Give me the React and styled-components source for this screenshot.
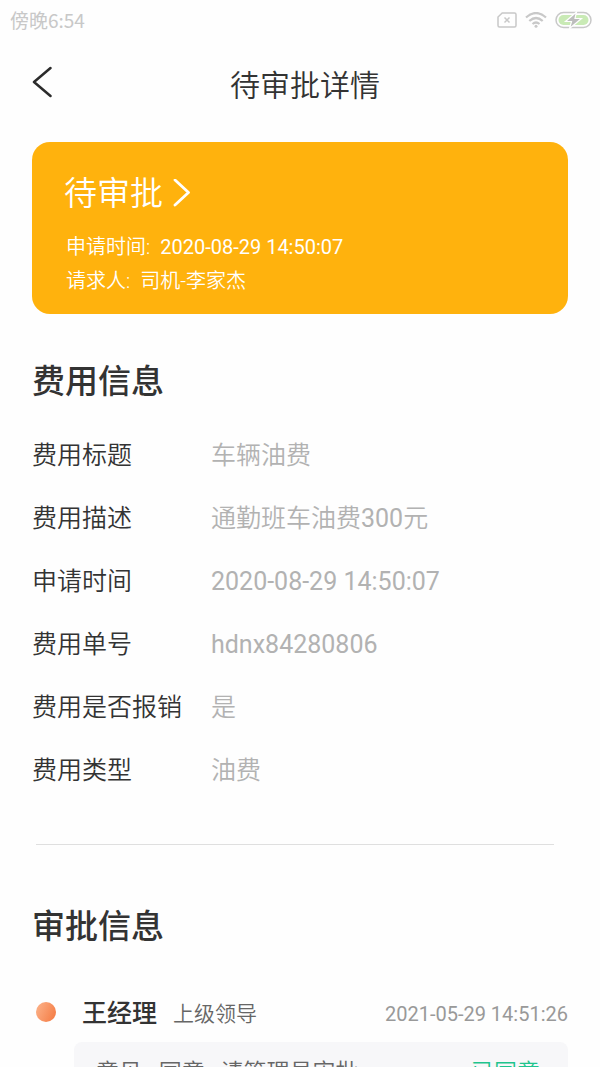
import React from "react";
import styled, { createGlobalStyle } from "styled-components";

const GlobalStyle = createGlobalStyle`
  * {
    box-sizing: border-box;
  }

  body {
    margin: 0;
    background: #fefefe;
    color: #333333;
    font-family: Roboto, "Noto Sans CJK SC", sans-serif;
    font-weight: 350;
  }
`;

const Page = styled.div`
  height: 100vh;
  overflow: hidden;
`;

const StatusBar = styled.div`
  display: flex;
  align-items: center;
  justify-content: space-between;
  height: 40px;
  padding: 0 8px 0 10px;
  color: #c8c8c8;
  font-family: "Noto Sans CJK SC", sans-serif;
  font-size: 19px;
  font-weight: 400;
  line-height: 40px;
`;

const StatusIcons = styled.div`
  display: flex;
  align-items: center;
  gap: 8px;
`;

const NavBar = styled.header`
  display: grid;
  grid-template-columns: 56px 1fr 56px;
  align-items: start;
  height: 88px;
  padding: 18px 10px 0 20px;
`;

const BackButton = styled.button`
  display: flex;
  align-items: center;
  justify-content: flex-start;
  height: 48px;
  padding: 0 12px;
  border: none;
  background: none;
  color: #2b2b2b;
  cursor: pointer;
`;

const Title = styled.h1`
  margin: 0;
  padding-top: 4px;
  font-size: 30px;
  font-weight: 350;
  line-height: 48px;
  text-align: center;
`;

const Content = styled.main`
  padding: 14px 32px 0;
`;

const StatusCard = styled.section`
  padding: 26px 32px 16px;
  border-radius: 18px;
  background: #ffb20d;
  color: #ffffff;
`;

const StatusLink = styled.a`
  display: inline-flex;
  align-items: center;
  gap: 10px;
  margin-bottom: 10px;
  color: inherit;
  font-size: 33px;
  line-height: 52px;
  text-decoration: none;
`;

const CardLine = styled.p`
  display: flex;
  gap: 10px;
  margin: 0;
  padding-left: 2px;
  font-size: 20px;
  line-height: 34px;
`;

const Latin = styled.span`
  font-weight: 400;
`;

const SectionTitle = styled.h2`
  margin: 0;
  font-size: 33px;
  font-weight: 500;
  line-height: 48px;
`;

const Section = styled.section`
  padding-top: 44px;
`;

const FieldList = styled.dl`
  margin: 18px 0 0;
`;

const Field = styled.div`
  display: flex;
  font-size: 25px;
  line-height: 63px;
`;

const FieldName = styled.dt`
  width: 179px;
`;

const FieldValue = styled.dd`
  margin: 0;
  color: #b2b2b2;
`;

const Divider = styled.hr`
  height: 1px;
  margin: 42px 14px 14px 4px;
  border: none;
  background: #dfdfdf;
`;

const Step = styled.article`
  display: grid;
  grid-template-columns: 42px 1fr;
  margin-top: 43px;
`;

const Dot = styled.span`
  width: 20px;
  height: 20px;
  margin: 8px 4px;
  border-radius: 50%;
  background: linear-gradient(115deg, #fcb48c, #f4783f);
`;

const StepHead = styled.div`
  display: flex;
  align-items: center;
  padding-left: 8px;
  line-height: 40px;
`;

const StepName = styled.strong`
  font-size: 25px;
  font-weight: 500;
`;

const StepRole = styled.span`
  margin-left: 16px;
  color: #666666;
  font-size: 21px;
`;

const StepTime = styled.time`
  margin-left: auto;
  color: #999999;
  font-size: 20px;
  font-weight: 400;
`;

const Comment = styled.div`
  display: flex;
  grid-column: 2;
  gap: 12px;
  margin-top: 8px;
  padding: 11px 28px 8px 22px;
  border-radius: 8px;
  background: #f7f7f9;
  color: #666666;
  font-size: 23px;
  line-height: 40px;
`;

const Agreed = styled.span`
  margin-left: auto;
  color: #1fc48d;
`;

const fields = [
  { name: "费用标题", value: "车辆油费" },
  { name: "费用描述", value: <>通勤班车油费<Latin>300</Latin>元</> },
  { name: "申请时间", value: <Latin>2020-08-29 14:50:07</Latin> },
  { name: "费用单号", value: <Latin>hdnx84280806</Latin> },
  { name: "费用是否报销", value: "是" },
  { name: "费用类型", value: "油费" },
];

const NoSimIcon = () => (
  <svg width="20" height="16" viewBox="0 0 20 16" fill="none" stroke="#c8c8c8" strokeWidth="1.5">
    <path d="M5.2 1H17.5A1.5 1.5 0 0 1 19 2.5V13.5A1.5 1.5 0 0 1 17.5 15H2.5A1.5 1.5 0 0 1 1 13.5V5Z" />
    <path d="M7.5 5.5l5 5M12.5 5.5l-5 5" />
  </svg>
);

const WifiIcon = () => (
  <svg width="22" height="16" viewBox="0 0 22 16" fill="none" stroke="#c8c8c8" strokeWidth="2.2">
    <path d="M1 5.5Q11 -3.5 21 5.5" />
    <path d="M4.3 9Q11 3 17.7 9" />
    <path d="M7.5 12Q11 9 14.5 12" />
    <circle cx="11" cy="14.3" r="1.5" fill="#c8c8c8" stroke="none" />
  </svg>
);

const BatteryIcon = () => (
  <svg width="37" height="18" viewBox="0 0 37 18">
    <rect x="1" y="1.5" width="35" height="15" rx="7.5" fill="#fefefe" stroke="#c8c8c8" strokeWidth="1.5" />
    <rect x="3.5" y="4" width="30" height="10" rx="5" fill="#c9eab5" />
    <path d="M21.5 1L10.500 10.5H16.5L14.5 17.5L26.5 7.5H20Z" fill="#bdbdbd" stroke="#fefefe" strokeWidth="1.2" />
  </svg>
);

const App = () => {
  return (
    <Page>
      <GlobalStyle />
      <StatusBar>
        <span>傍晚6:54</span>
        <StatusIcons>
          <NoSimIcon />
          <WifiIcon />
          <BatteryIcon />
        </StatusIcons>
      </StatusBar>
      <NavBar>
        <BackButton type="button" aria-label="返回">
          <svg width="20" height="32" viewBox="0 0 20 32" fill="none" stroke="currentColor" strokeWidth="2.5" strokeLinecap="round" strokeLinejoin="round">
            <path d="M18.5 2L2 16L18.5 30" />
          </svg>
        </BackButton>
        <Title>待审批详情</Title>
      </NavBar>
      <Content>
        <StatusCard>
          <StatusLink href="#approval">
            待审批
            <svg width="18" height="30" viewBox="0 0 18 30" fill="none" stroke="currentColor" strokeWidth="2.8" strokeLinecap="round" strokeLinejoin="round">
              <path d="M2 1L15.5 13.5L2 26" />
            </svg>
          </StatusLink>
          <CardLine>
            <span>申请时间:</span>
            <Latin>2020-08-29 14:50:07</Latin>
          </CardLine>
          <CardLine>
            <span>请求人:</span>
            <span>司机-李家杰</span>
          </CardLine>
        </StatusCard>
        <Section>
          <SectionTitle>费用信息</SectionTitle>
          <FieldList>
            {fields.map((field) => (
              <Field key={field.name}>
                <FieldName>{field.name}</FieldName>
                <FieldValue>{field.value}</FieldValue>
              </Field>
            ))}
          </FieldList>
        </Section>
        <Divider />
        <Section id="approval">
          <SectionTitle>审批信息</SectionTitle>
          <Step>
            <Dot />
            <StepHead>
              <StepName>王经理</StepName>
              <StepRole>上级领导</StepRole>
              <StepTime dateTime="2021-05-29T14:51:26">2021-05-29 14:51:26</StepTime>
            </StepHead>
            <Comment>
              <span>意见:</span>
              <span>同意 , 请管理员审批</span>
              <Agreed>已同意</Agreed>
            </Comment>
          </Step>
        </Section>
      </Content>
    </Page>
  );
};

export default App;
